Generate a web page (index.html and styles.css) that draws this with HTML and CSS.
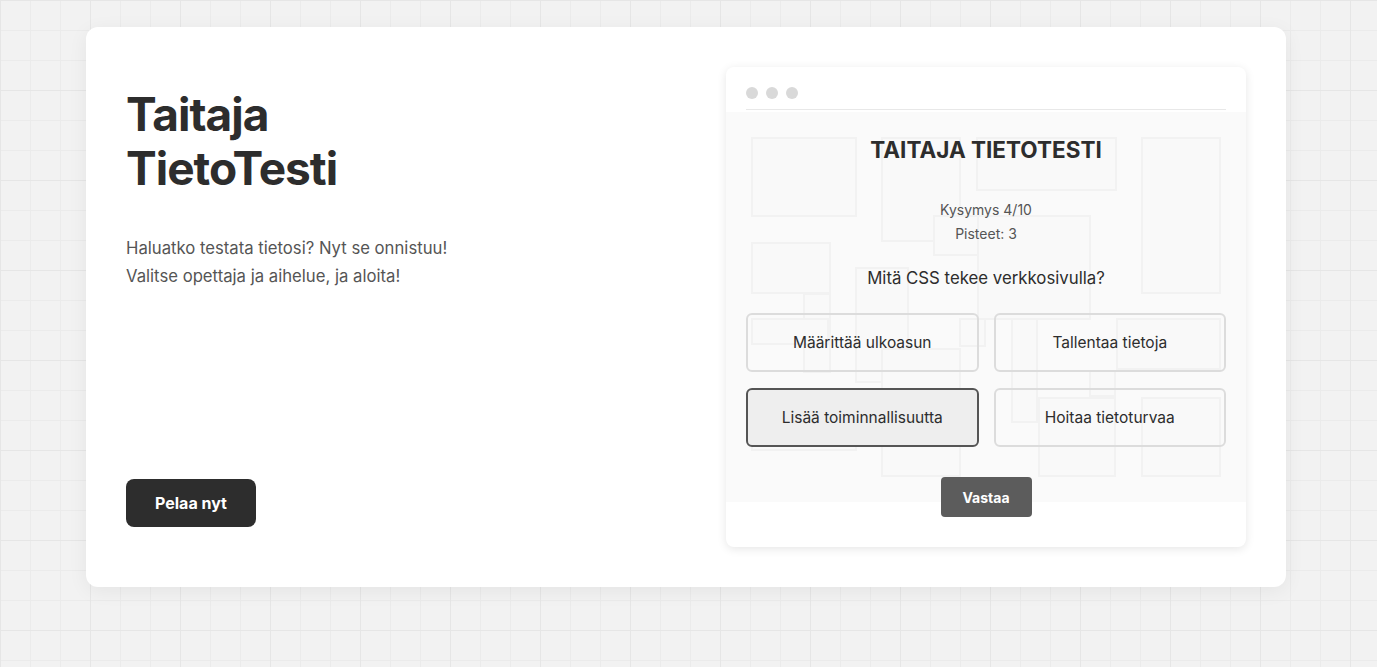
FILE: index.html
```html
<!DOCTYPE html>
<html lang="fi">
<head>
<meta charset="utf-8">
<title>Taitaja TietoTesti</title>
<link rel="stylesheet" href="styles.css">
</head>
<body>
<main class="page">
  <section class="hero-card">
    <div class="intro">
      <h1 class="intro-title"><span class="title-line">Taitaja</span><span class="title-line">TietoTesti</span></h1>
      <p class="intro-text">Haluatko testata tietosi? Nyt se onnistuu!<br>Valitse opettaja ja aihelue, ja aloita!</p>
      <button class="play-btn">Pelaa nyt</button>
    </div>
    <div class="mockup">
      <div class="mockup-bar">
        <span class="dot"></span><span class="dot"></span><span class="dot"></span>
      </div>
      <div class="quiz">
        <div class="quiz-bg" aria-hidden="true">
          <span class="tile" style="left:25px;top:25px;width:106px;height:80px"></span>
          <span class="tile" style="left:155px;top:25px;width:80px;height:105px"></span>
          <span class="tile" style="left:250px;top:25px;width:141px;height:54px"></span>
          <span class="tile" style="left:415px;top:25px;width:80px;height:157px"></span>
          <span class="tile" style="left:25px;top:130px;width:80px;height:52px"></span>
          <span class="tile" style="left:207px;top:103px;width:50px;height:41px"></span>
          <span class="tile" style="left:251px;top:103px;width:114px;height:105px"></span>
          <span class="tile" style="left:129px;top:155px;width:54px;height:116px"></span>
          <span class="tile" style="left:77px;top:181px;width:28px;height:80px"></span>
          <span class="tile" style="left:25px;top:206px;width:78px;height:27px"></span>
          <span class="tile" style="left:155px;top:236px;width:80px;height:129px"></span>
          <span class="tile" style="left:25px;top:311px;width:106px;height:28px"></span>
          <span class="tile" style="left:233px;top:206px;width:27px;height:29px"></span>
          <span class="tile" style="left:312px;top:285px;width:78px;height:80px"></span>
          <span class="tile" style="left:415px;top:285px;width:80px;height:80px"></span>
          <span class="tile" style="left:390px;top:206px;width:105px;height:52px"></span>
          <span class="tile" style="left:285px;top:206px;width:27px;height:105px"></span>
          <span class="tile" style="left:363px;top:258px;width:27px;height:27px"></span>
        </div>
        <div class="quiz-content">
          <h2 class="quiz-title">TAITAJA TIETOTESTI</h2>
          <div class="quiz-stats">
            <div>Kysymys 4/10</div>
            <div>Pisteet: 3</div>
          </div>
          <p class="quiz-question">Mitä CSS tekee verkkosivulla?</p>
          <div class="options">
            <button class="option">Määrittää ulkoasun</button>
            <button class="option">Tallentaa tietoja</button>
            <button class="option is-selected">Lisää toiminnallisuutta</button>
            <button class="option">Hoitaa tietoturvaa</button>
          </div>
          <div class="answer-row">
            <button class="answer-btn">Vastaa</button>
          </div>
        </div>
      </div>
    </div>
  </section>
</main>
</body>
</html>
```

FILE: styles.css
```css
* { box-sizing: border-box; }

html, body {
  margin: 0;
  padding: 0;
}

body {
  font-family: Inter, "Noto Sans", "Liberation Sans", sans-serif;
  color: #2d2d2d;
  background-color: #f2f2f2;
  background-image:
    linear-gradient(to right, #e6e6e6 1px, transparent 1px),
    linear-gradient(to bottom, #e6e6e6 1px, transparent 1px),
    linear-gradient(to right, #ebebeb 1px, transparent 1px),
    linear-gradient(to bottom, #ebebeb 1px, transparent 1px);
  background-size: 90px 90px, 90px 90px, 30px 30px, 30px 30px;
  background-position: 0 0, 0 0, 0 0, 0 0;
  min-height: 667px;
}

.page {
  padding: 27px 91px 80px 86px;
}

.hero-card {
  width: 1200px;
  height: 560px;
  background: #fff;
  border-radius: 12px;
  box-shadow: 0 4px 20px rgba(0, 0, 0, 0.06);
  padding: 40px;
  display: grid;
  grid-template-columns: 1fr 1fr;
  gap: 80px;
}

.intro {
  display: flex;
  flex-direction: column;
  align-items: flex-start;
  padding: 20px 0;
}

.intro-title {
  margin: 0;
  display: flex;
  flex-direction: column;
  font-size: 46px;
  line-height: 54px;
  font-weight: 700;
  letter-spacing: -1px;
  color: #2d2d2d;
}

.title-line {
  display: block;
  height: 54px;
}

.intro-text {
  margin: 39px 0 0;
  font-size: 16.7px;
  line-height: 28px;
  color: #555;
}

.play-btn {
  margin-top: auto;
  height: 48px;
  padding: 0 29px;
  border: none;
  border-radius: 8px;
  background: #2d2d2d;
  color: #fff;
  font-family: inherit;
  font-size: 16px;
  font-weight: 700;
}

.mockup {
  background: #fff;
  border-radius: 8px;
  box-shadow: 0 2px 10px rgba(0, 0, 0, 0.1);
  display: flex;
  flex-direction: column;
}

.mockup-bar {
  display: flex;
  gap: 8px;
  margin: 0 20px 2px;
  padding: 20px 0 10px;
  border-bottom: 1px solid #e8e8e8;
}

.dot {
  width: 12px;
  height: 12px;
  border-radius: 50%;
  background: #d9d9d9;
}

.quiz {
  position: relative;
  height: 390px;
  background: #fafafa;
}

.quiz-bg {
  position: absolute;
  inset: 0;
  overflow: hidden;
}

.tile {
  position: absolute;
  border: 2px solid #f2f2f2;
  background: #f9f9f9;
}

.quiz-content {
  position: relative;
  padding: 24px 20px 0;
  display: flex;
  flex-direction: column;
  align-items: center;
}

.quiz-title {
  margin: 0;
  font-size: 22.5px;
  line-height: 28px;
  font-weight: 700;
  color: #2d2d2d;
}

.quiz-stats {
  margin-top: 34px;
  font-size: 14px;
  line-height: 24px;
  color: #555;
  text-align: center;
}

.quiz-question {
  margin: 20px 0 0;
  font-size: 16.8px;
  line-height: 25px;
  color: #2d2d2d;
}

.options {
  margin-top: 22px;
  width: 100%;
  display: grid;
  grid-template-columns: 1fr 1fr;
  gap: 16px 15px;
}

.option {
  height: 59px;
  border: 2px solid #dcdcdc;
  border-radius: 6px;
  background: transparent;
  font-family: inherit;
  font-size: 15.5px;
  color: #2d2d2d;
}

.option.is-selected {
  border-color: #555;
  background: #eeeeee;
}

.answer-row {
  margin-top: 30px;
  display: flex;
  justify-content: center;
}

.answer-btn {
  height: 40px;
  width: 91px;
  border: none;
  border-radius: 4px;
  background: #5c5c5c;
  color: #fff;
  font-family: inherit;
  font-size: 14px;
  font-weight: 700;
}
```
